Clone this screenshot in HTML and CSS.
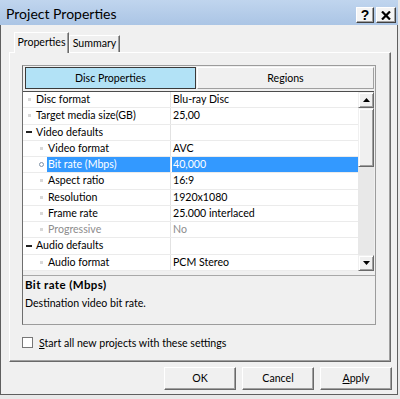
FILE: index.html
```html
<!DOCTYPE html>
<html>
<head>
<meta charset="utf-8">
<link rel="stylesheet" href="styles.css">
</head>
<body>
<div class="window">
  <div class="titlebar">
    <span class="title">Project Properties</span>
    <div class="tb-btns">
      <div class="tb-btn help">?</div>
      <div class="tb-btn close"><svg width="10" height="9" viewBox="0 0 10 9"><path d="M1 0.5 L9 8.5 M9 0.5 L1 8.5" stroke="#000" stroke-width="2.2" fill="none"/></svg></div>
    </div>
  </div>
  <div class="client">
    <div class="tabs">
      <div class="tab active">Properties</div>
      <div class="tab">Summary</div>
    </div>
    <div class="panel">
      <div class="box">
        <div class="gheader">
          <div class="gtab sel">Disc Properties</div>
          <div class="gtab">Regions</div>
        </div>
        <div class="gbody">
          <div class="rows">
            <div class="row l1"><div class="name"><span class="glyph"><i class="dot"></i></span><span class="label">Disc format</span></div><div class="val">Blu-ray Disc</div></div>
            <div class="row l1"><div class="name"><span class="glyph"><i class="dot"></i></span><span class="label">Target media size(GB)</span></div><div class="val">25,00</div></div>
            <div class="row l1 cat"><div class="name"><span class="glyph"><i class="minus"></i></span><span class="label">Video defaults</span></div><div class="val"></div></div>
            <div class="row l2"><div class="name"><span class="glyph"><i class="dot"></i></span><span class="label">Video format</span></div><div class="val">AVC</div></div>
            <div class="row l2 selected"><div class="name"><span class="glyph"><i class="ring"></i></span><span class="label">Bit rate (Mbps)</span></div><div class="val"><span class="vsel">40,000</span></div></div>
            <div class="row l2"><div class="name"><span class="glyph"><i class="dot"></i></span><span class="label">Aspect ratio</span></div><div class="val">16:9</div></div>
            <div class="row l2"><div class="name"><span class="glyph"><i class="dot"></i></span><span class="label">Resolution</span></div><div class="val">1920x1080</div></div>
            <div class="row l2"><div class="name"><span class="glyph"><i class="dot"></i></span><span class="label">Frame rate</span></div><div class="val">25.000 interlaced</div></div>
            <div class="row l2 disabled"><div class="name"><span class="glyph"><i class="dot"></i></span><span class="label">Progressive</span></div><div class="val">No</div></div>
            <div class="row l1 cat"><div class="name"><span class="glyph"><i class="minus"></i></span><span class="label">Audio defaults</span></div><div class="val"></div></div>
            <div class="row l2"><div class="name"><span class="glyph"><i class="dot"></i></span><span class="label">Audio format</span></div><div class="val">PCM Stereo</div></div>
          </div>
          <div class="scrollbar">
            <div class="sbtn"><svg width="7" height="4" viewBox="0 0 7 4"><path d="M3.5 0 L7 4 L0 4 Z" fill="#000"/></svg></div>
            <div class="sthumb"></div>
            <div class="strack"></div>
            <div class="sbtn"><svg width="7" height="4" viewBox="0 0 7 4"><path d="M0 0 L7 0 L3.5 4 Z" fill="#000"/></svg></div>
          </div>
        </div>
        <div class="helppane">
          <div class="htitle">Bit rate (Mbps)</div>
          <div class="hdesc">Destination video bit rate.</div>
        </div>
      </div>
      <label class="check"><span class="cbox"></span><span class="ctext"><u>S</u>tart all new projects with these settings</span></label>
    </div>
    <div class="buttons">
      <div class="btn">OK</div>
      <div class="btn">Cancel</div>
      <div class="btn"><u>A</u>pply</div>
    </div>
  </div>
</div>
</body>
</html>
```
FILE: styles.css
```css
* { box-sizing: border-box; }
html, body { margin: 0; padding: 0; }
body {
  width: 400px;
  height: 399px;
  background: #e9e9e9;
  font-family: Lato, "Liberation Sans", sans-serif;
  font-size: 10.6px;
  color: #000;
  overflow: hidden;
}
.window {
  width: 398px;
  height: 395px;
  display: flex;
  flex-direction: column;
  background: #f0f0f0;
  border: 1px solid #5f5f5f;
  border-top: none;
}
.titlebar {
  height: 25px;
  flex: none;
  display: flex;
  align-items: flex-start;
  background: linear-gradient(#c0d5ee, #abc5e5);
  margin: 0 -1px;
  padding-left: 6px;
}
.title {
  font-size: 14px;
  line-height: 25px;
  margin-top: 1px;
  color: #000;
}
.tb-btns {
  margin-left: auto;
  margin-right: 2px;
  margin-top: 7px;
  display: flex;
  gap: 2px;
}
.tb-btn {
  height: 16px;
  background: #f4f4f4;
  border: 1px solid;
  border-color: #fff #404040 #404040 #fff;
  box-shadow: inset -1px -1px #a0a0a0;
  display: flex;
  align-items: center;
  justify-content: center;
}
.tb-btn.help {
  width: 18px;
  font-family: "Liberation Sans", sans-serif;
  font-weight: bold;
  font-size: 14px;
  line-height: 14px;
}
.tb-btn.close { width: 20px; }

.client {
  flex: 1;
  display: flex;
  flex-direction: column;
  padding-top: 7px;
}
.tabs {
  height: 21px;
  margin-left: 13px;
  margin-bottom: -1px;
  display: flex;
  align-items: flex-end;
  position: relative;
  z-index: 1;
}
.tab {
  height: 17px;
  margin-bottom: 1px;
  line-height: 15px;
  background: #f0f0f0;
  border: 1px solid;
  border-bottom: none;
  border-color: #fff #696969 transparent #fff;
  box-shadow: inset -1px 0 #a0a0a0;
  width: 51px;
  text-align: center;
  white-space: nowrap;
}
.tab.active {
  height: 21px;
  margin-bottom: 0;
  width: 55px;
  line-height: 18px;
}
.panel {
  margin-left: 8px;
  width: 382px;
  height: 310px;
  flex: none;
  border-top: 1px solid #fff;
  border-left: 1px solid #fff;
  border-right: 1px solid #696969;
  border-bottom: 1px solid #696969;
  box-shadow: inset -1px -1px #a0a0a0;
  padding: 12px 0 0 12px;
}
.box {
  width: 354px;
  height: 260px;
  border: 1px solid #9c9c9c;
  border-left-color: #6e6e6e;
  display: flex;
  flex-direction: column;
}
.gheader {
  height: 22px;
  margin-top: 1px;
  padding-left: 2px;
  display: flex;
  gap: 1px;
}
.gtab {
  height: 22px;
  line-height: 20px;
  text-align: center;
  border: 1px solid;
  border-color: #fff #a0a0a0 #a0a0a0 #fff;
  background: #f0f0f0;
  width: 177px;
}
.gtab.sel {
  width: 171px;
  background: #b2e2f6;
  border-color: #3a3a3a;
}
.gbody {
  margin-top: 2px;
  height: 180px;
  border-top: 1px solid #4d4d4d;
  background: #fff;
  display: flex;
  margin-right: 1px;
}
.rows {
  flex: 1;
  overflow: hidden;
}
.row {
  height: 16.25px;
  display: grid;
  grid-template-columns: 148px 1fr;
  border-bottom: 1px solid #ebebeb;
}
.name {
  display: flex;
  align-items: stretch;
  border-right: 1px solid #e2e2e2;
}
.glyph {
  flex: none;
  display: flex;
  align-items: center;
  width: 12px;
}
.l2 .glyph { width: 24px; }
.label {
  flex: 1;
  padding-left: 1px;
  line-height: 15px;
  white-space: nowrap;
}
.dot {
  width: 3px;
  height: 3px;
  background: #d8d8d8;
  margin-left: 5px;
}
.l2 .dot { margin-left: 17px; }
.minus {
  width: 6px;
  height: 2px;
  background: #222;
  margin-left: 3px;
}
.ring {
  width: 5px;
  height: 5px;
  border: 1px solid #7f93a8;
  border-radius: 50%;
  margin-left: 16px;
}
.val {
  padding-left: 2px;
  line-height: 15px;
  white-space: nowrap;
}
.selected .label {
  background: #3399ff;
  color: #fff;
}
.selected .val {
  padding-left: 1px;
}
.vsel {
  display: block;
  background: #3399ff;
  color: #fff;
  padding-left: 1px;
  height: 15px;
}
.disabled .label, .disabled .val { color: #8d8d8d; }

.scrollbar {
  width: 16px;
  flex: none;
  display: flex;
  flex-direction: column;
  background: #e8e8e8;
}
.sbtn, .sthumb {
  background: #f0f0f0;
  border: 1px solid;
  border-color: #f0f0f0 #696969 #696969 #f0f0f0;
  box-shadow: inset 1px 1px #fff, inset -1px -1px #a0a0a0;
}
.sbtn {
  height: 16px;
  display: flex;
  align-items: center;
  justify-content: center;
}
.sthumb { height: 59px; }
.strack { flex: 1; }

.helppane {
  margin-top: 4px;
  flex: 1;
  border-top: 1px solid #a8a8a8;
  padding: 1px 0 0 2px;
}
.htitle {
  font-weight: bold;
  font-size: 11.5px;
  letter-spacing: 0.4px;
  line-height: 16px;
}
.hdesc {
  margin-top: 2px;
  line-height: 16px;
}
.check {
  margin-top: 12px;
  display: flex;
  align-items: center;
  height: 11px;
}
.cbox {
  width: 11px;
  height: 11px;
  border: 1px solid #777;
  background: #fff;
  flex: none;
}
.ctext {
  margin-left: 6px;
  line-height: 14px;
}
.buttons {
  margin-top: 5px;
  display: flex;
  justify-content: flex-end;
  gap: 6px;
  padding-right: 5px;
}
.btn {
  width: 72px;
  height: 23px;
  line-height: 21px;
  text-align: center;
  background: #f0f0f0;
  border: 1px solid;
  border-color: #fff #696969 #696969 #fff;
  box-shadow: inset -1px -1px #a0a0a0;
}
```
